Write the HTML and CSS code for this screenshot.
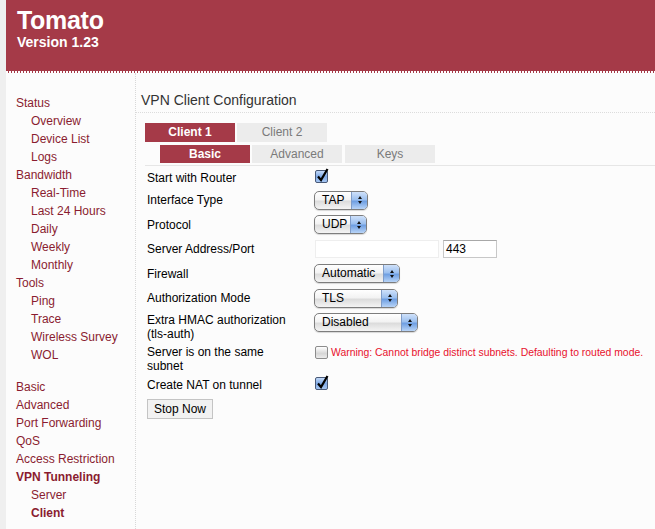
FILE: index.html
```html
<!DOCTYPE html>
<html>
<head>
<meta charset="utf-8">
<title>Tomato</title>
<link rel="stylesheet" href="styles.css">
</head>
<body>
<div class="page">
  <div class="header">
    <div class="brand">Tomato</div>
    <div class="version">Version 1.23</div>
    <div class="dots"></div>
  </div>
  <div class="main">
    <div class="sidebar">
      <a class="nav">Status</a>
      <a class="nav sub">Overview</a>
      <a class="nav sub">Device List</a>
      <a class="nav sub">Logs</a>
      <a class="nav">Bandwidth</a>
      <a class="nav sub">Real-Time</a>
      <a class="nav sub">Last 24 Hours</a>
      <a class="nav sub">Daily</a>
      <a class="nav sub">Weekly</a>
      <a class="nav sub">Monthly</a>
      <a class="nav">Tools</a>
      <a class="nav sub">Ping</a>
      <a class="nav sub">Trace</a>
      <a class="nav sub">Wireless Survey</a>
      <a class="nav sub">WOL</a>
      <a class="nav gap">Basic</a>
      <a class="nav">Advanced</a>
      <a class="nav">Port Forwarding</a>
      <a class="nav">QoS</a>
      <a class="nav">Access Restriction</a>
      <a class="nav active">VPN Tunneling</a>
      <a class="nav sub">Server</a>
      <a class="nav sub active">Client</a>
    </div>
    <div class="content">
      <div class="section-title">VPN Client Configuration</div>
      <div class="tabs tabs-top">
        <span class="tab on">Client 1</span>
        <span class="tab">Client 2</span>
      </div>
      <div class="tabs tabs-sub">
        <span class="tab on">Basic</span>
        <span class="tab">Advanced</span>
        <span class="tab keys">Keys</span>
      </div>
      <div class="form">
        <div class="row h21">
          <div class="label">Start with Router</div>
          <div class="ctrl"><span class="cb checked"><svg width="14" height="15" viewBox="0 0 14 15"><defs><linearGradient id="g1" x1="0" y1="0" x2="0" y2="1"><stop offset="0" stop-color="#c9defa"/><stop offset="0.5" stop-color="#7fa9e6"/><stop offset="1" stop-color="#a9c9f4"/></linearGradient></defs><rect x="0.5" y="2.5" width="12" height="12" rx="1.5" fill="url(#g1)" stroke="#4a5a78"/><path d="M3 8.5 L6 12 L12.5 1" fill="none" stroke="#000" stroke-width="2.2"/></svg></span></div>
        </div>
        <div class="row h24">
          <div class="label">Interface Type</div>
          <div class="ctrl"><span class="sel w54"><span class="val">TAP</span><span class="arr"><i class="up"></i><i class="dn"></i></span></span></div>
        </div>
        <div class="row h25">
          <div class="label">Protocol</div>
          <div class="ctrl"><span class="sel w53"><span class="val">UDP</span><span class="arr"><i class="up"></i><i class="dn"></i></span></span></div>
        </div>
        <div class="row h24">
          <div class="label">Server Address/Port</div>
          <div class="ctrl"><span class="inp addr"></span><span class="inp port">443</span></div>
        </div>
        <div class="row h25">
          <div class="label">Firewall</div>
          <div class="ctrl"><span class="sel w86"><span class="val">Automatic</span><span class="arr"><i class="up"></i><i class="dn"></i></span></span></div>
        </div>
        <div class="row h24">
          <div class="label">Authorization Mode</div>
          <div class="ctrl"><span class="sel w84"><span class="val">TLS</span><span class="arr"><i class="up"></i><i class="dn"></i></span></span></div>
        </div>
        <div class="row h33 top">
          <div class="label">Extra HMAC authorization<br>(tls-auth)</div>
          <div class="ctrl"><span class="sel w104"><span class="val">Disabled</span><span class="arr"><i class="up"></i><i class="dn"></i></span></span></div>
        </div>
        <div class="row h31 top2">
          <div class="label">Server is on the same<br>subnet</div>
          <div class="ctrl"><span class="cb plain"></span><span class="warn">Warning: Cannot bridge distinct subnets. Defaulting to routed mode.</span></div>
        </div>
        <div class="row h21">
          <div class="label">Create NAT on tunnel</div>
          <div class="ctrl"><span class="cb checked"><svg width="14" height="15" viewBox="0 0 14 15"><defs><linearGradient id="g2" x1="0" y1="0" x2="0" y2="1"><stop offset="0" stop-color="#c9defa"/><stop offset="0.5" stop-color="#7fa9e6"/><stop offset="1" stop-color="#a9c9f4"/></linearGradient></defs><rect x="0.5" y="2.5" width="12" height="12" rx="1.5" fill="url(#g2)" stroke="#4a5a78"/><path d="M3 8.5 L6 12 L12.5 1" fill="none" stroke="#000" stroke-width="2.2"/></svg></span></div>
        </div>
        <div class="btn-row"><button class="btn">Stop Now</button></div>
      </div>
    </div>
  </div>
</div>
</body>
</html>
```

FILE: styles.css
```css
html, body {
  margin: 0;
  padding: 0;
}
body {
  background: #efefef;
  font-family: "Liberation Sans", Arial, Helvetica, sans-serif;
  font-size: 12px;
  color: #000;
}
.page {
  margin-left: 6px;
  background: #fcfcfc;
  min-height: 529px;
}
.header {
  background: #a53a48;
  height: 73px;
  display: flex;
  flex-direction: column;
  color: #fff;
  font-weight: bold;
}
.brand {
  font-size: 25px;
  line-height: 28px;
  padding: 6px 0 0 11px;
  letter-spacing: -0.3px;
}
.version {
  font-size: 14px;
  line-height: 16px;
  padding-left: 11px;
}
.dots {
  margin-top: auto;
  height: 2px;
  background: repeating-linear-gradient(90deg, #ffffff 0 2px, transparent 2px 3px);
}
.main {
  display: flex;
}
.sidebar {
  flex: 0 0 auto;
  width: 119px;
  padding: 21px 0 0 10px;
  border-right: 1px dotted #d8d8d8;
  min-height: 435px;
  display: flex;
  flex-direction: column;
}
.nav {
  display: block;
  line-height: 18px;
  color: #8a1c30;
  text-decoration: none;
}
.nav.sub {
  padding-left: 15px;
}
.nav.gap {
  margin-top: 14px;
}
.nav.active {
  font-weight: bold;
}
.content {
  flex: 1 1 0;
  min-width: 0;
}
.section-title {
  font-size: 14px;
  line-height: 18px;
  color: #333;
  padding: 18px 0 3px 5px;
  border-bottom: 1px dotted #dcdcdc;
}
.tabs {
  display: flex;
  gap: 2px;
}
.tabs-top {
  margin: 10px 0 0 9px;
}
.tabs-sub {
  margin: 3px 0 0 9px;
  padding: 0 0 2px 15px;
  border-bottom: 1px solid #e6e6e6;
}
.tab {
  width: 90px;
  height: 19px;
  line-height: 19px;
  text-align: center;
  background: #ececec;
  color: #7a7a7a;
}
.tabs-sub .tab {
  height: 18px;
  line-height: 18px;
  width: 90px;
}
.tabs-sub .tab.keys {
  margin-left: 1px;
}
.tab.on {
  background: #a53a48;
  color: #fff;
  font-weight: bold;
}
.form {
  padding: 1px 0 0 11px;
  display: flex;
  flex-direction: column;
}
.row {
  display: grid;
  grid-template-columns: 167px 1fr;
  align-items: center;
}
.row .label {
  line-height: 14px;
}
.row.h21 { height: 21px; }
.row.h24 { height: 24px; }
.row.h25 { height: 25px; }
.row.h31 { height: 31px; }
.row.h33 { height: 33px; }
.row.top {
  align-items: start;
  padding-top: 3px;
  box-sizing: border-box;
}
.row.top2 {
  align-items: start;
  padding-top: 2px;
  box-sizing: border-box;
}
.ctrl {
  display: flex;
  align-items: center;
}
.cb {
  display: inline-block;
  width: 14px;
  height: 15px;
  margin-left: 1px;
}
.cb svg {
  display: block;
  margin-top: -2px;
}
.cb.plain {
  width: 11px;
  height: 11px;
  margin-top: 1px;
  border: 1px solid #8c8c8c;
  border-radius: 2px;
  background: linear-gradient(#ffffff, #d6d6d6 60%, #ececec);
}
.warn {
  color: #e8112d;
  font-size: 10.4px;
  margin-left: 3px;
  white-space: nowrap;
}
.sel {
  display: inline-flex;
  height: 19px;
  box-sizing: border-box;
  border: 1px solid #7d7d7d;
  border-radius: 5px;
  background: linear-gradient(#ffffff 0%, #f3f3f3 45%, #dcdcdc 55%, #f4f4f4 100%);
  overflow: hidden;
  box-shadow: 0 1px 1px rgba(0,0,0,0.15);
}
.sel .val {
  flex: 1;
  padding-left: 7px;
  line-height: 17px;
}
.sel .arr {
  width: 15px;
  border-left: 1px solid #7f9cc8;
  background: linear-gradient(#cfe1fa 0%, #9cc0ef 45%, #6f9fe2 55%, #b8d4f7 100%);
  display: flex;
  flex-direction: column;
  align-items: center;
  justify-content: center;
  gap: 2px;
}
.sel .arr i {
  display: block;
  width: 0;
  height: 0;
  border-left: 2.5px solid transparent;
  border-right: 2.5px solid transparent;
}
.sel .arr i.up {
  border-bottom: 3px solid #111;
}
.sel .arr i.dn {
  border-top: 3px solid #111;
}
.w53 { width: 53px; }
.w54 { width: 54px; }
.w84 { width: 84px; }
.w86 { width: 86px; }
.w104 { width: 104px; }
.inp {
  display: inline-block;
  height: 18px;
  box-sizing: border-box;
  background: #fff;
  border: 1px solid #c8c8c8;
  border-top-color: #a8a8a8;
  line-height: 16px;
}
.inp.addr {
  width: 124px;
  margin-left: 1px;
  border-color: #eeeeee;
}
.inp.port {
  width: 54px;
  margin-left: 4px;
  padding-left: 2px;
}
.btn-row {
  margin-top: 4px;
}
.btn {
  font-family: "Liberation Sans", Arial, Helvetica, sans-serif;
  font-size: 12px;
  height: 20px;
  width: 66px;
  padding: 0;
  background: #f2f2f2;
  border: 1px solid #c4c4c4;
  border-radius: 0;
  color: #000;
}
```
